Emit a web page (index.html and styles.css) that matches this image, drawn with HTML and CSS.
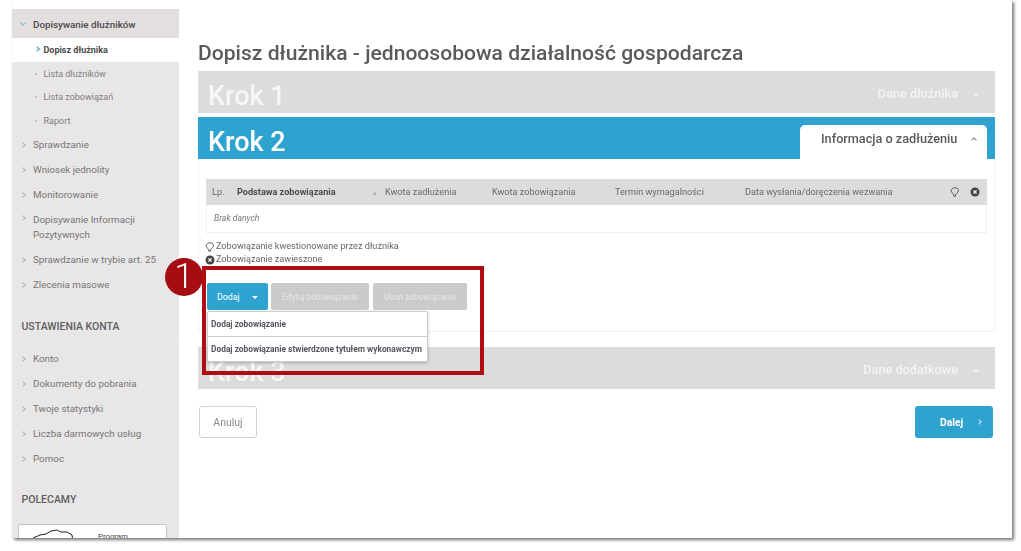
FILE: index.html
```html
<!DOCTYPE html>
<html lang="pl">
<head>
<meta charset="utf-8">
<title>Dopisz dłużnika</title>
<link rel="stylesheet" href="styles.css">
</head>
<body>
<div class="window">
  <aside class="sidebar">
    <div class="nav-item nav-open"><span class="chev chev-down"></span>Dopisywanie dłużników</div>
    <div class="sub-item sub-active"><span class="chev chev-blue"></span>Dopisz dłużnika</div>
    <div class="sub-item"><span class="dot"></span>Lista dłużników</div>
    <div class="sub-item"><span class="dot"></span>Lista zobowiązań</div>
    <div class="sub-item"><span class="dot"></span>Raport</div>
    <div class="nav-item"><span class="chev"></span>Sprawdzanie</div>
    <div class="nav-item"><span class="chev"></span>Wniosek jednolity</div>
    <div class="nav-item"><span class="chev"></span>Monitorowanie</div>
    <div class="nav-item nav-double"><span class="chev"></span>Dopisywanie Informacji<br>Pozytywnych</div>
    <div class="nav-item"><span class="chev"></span>Sprawdzanie w trybie art. 25</div>
    <div class="nav-item"><span class="chev"></span>Zlecenia masowe</div>
    <h3 class="side-heading">USTAWIENIA KONTA</h3>
    <div class="nav-item"><span class="chev"></span>Konto</div>
    <div class="nav-item"><span class="chev"></span>Dokumenty do pobrania</div>
    <div class="nav-item"><span class="chev"></span>Twoje statystyki</div>
    <div class="nav-item"><span class="chev"></span>Liczba darmowych usług</div>
    <div class="nav-item"><span class="chev"></span>Pomoc</div>
    <h3 class="side-heading side-heading-plain">POLECAMY</h3>
    <div class="promo">
      <svg class="promo-map" width="42" height="14" viewBox="0 0 42 14"><path d="M1 9 L8 6 L14 5 L19 2 L25 1 L29 3 L35 3 L40 6 L41 13" fill="none" stroke="#222" stroke-width="1"/></svg>
      <span class="promo-text">Program</span>
    </div>
  </aside>

  <main class="main">
    <h1 class="title">Dopisz dłużnika - jednoosobowa działalność gospodarcza</h1>

    <div class="step step-off">
      <span class="step-name">Krok 1</span>
      <span class="step-label">Dane dłużnika<span class="chev chev-down chev-white"></span></span>
    </div>

    <div class="step step-on">
      <span class="step-name">Krok 2</span>
      <span class="step-tab">Informacja o zadłużeniu<span class="chev chev-up"></span></span>
    </div>

    <section class="panel">
      <div class="grid-head">
        <span>Lp.</span>
        <span class="col-strong">Podstawa zobowiązania</span>
        <span class="sort">▲</span>
        <span>Kwota zadłużenia</span>
        <span>Kwota zobowiązania</span>
        <span>Termin wymagalności</span>
        <span>Data wysłania/doręczenia wezwania</span>
        <svg class="ico" width="10" height="10" viewBox="0 0 10 10"><path d="M5 .8C2.800.8 1.200 2 1.200 3.800c0 1.300.8 2.100 1.800 2.600l.6 1 .3 1.800h1.500l.4-1.900 1-1c.9-.6 1.500-1.400 1.500-2.500C8.800 2 7.200.8 5 .8z" fill="none" stroke="#555" stroke-width="1"/></svg>
        <svg class="ico" width="10" height="10" viewBox="0 0 10 10"><circle cx="5" cy="5" r="4.500" fill="#444"/><path d="M3.400 3.400l3.200 3.200M6.600 3.400l-3.200 3.200" stroke="#fff" stroke-width="1.200"/></svg>
      </div>
      <div class="grid-empty">Brak danych</div>

      <div class="legend">
        <div class="legend-row"><svg class="ico" width="10" height="10" viewBox="0 0 10 10"><path d="M5 .8C2.800.8 1.200 2 1.200 3.800c0 1.300.8 2.100 1.800 2.600l.6 1 .3 1.800h1.500l.4-1.900 1-1c.9-.6 1.500-1.400 1.500-2.500C8.800 2 7.200.8 5 .8z" fill="none" stroke="#555" stroke-width="1"/></svg>Zobowiązanie kwestionowane przez dłużnika</div>
        <div class="legend-row"><svg class="ico" width="10" height="10" viewBox="0 0 10 10"><circle cx="5" cy="5" r="4.500" fill="#444"/><path d="M3.400 3.400l3.200 3.200M6.600 3.400l-3.200 3.200" stroke="#fff" stroke-width="1.200"/></svg>Zobowiązanie zawieszone</div>
      </div>

      <div class="actions">
        <div class="btn-wrap">
          <button class="btn btn-blue">Dodaj<span class="caret"></span></button>
          <div class="menu">
            <div class="menu-item">Dodaj zobowiązanie</div>
            <div class="menu-item">Dodaj zobowiązanie stwierdzone tytułem wykonawczym</div>
          </div>
        </div>
        <button class="btn btn-grey btn-edit">Edytuj zobowiązanie</button>
        <button class="btn btn-grey btn-del">Usuń zobowiązanie</button>
      </div>
    </section>

    <div class="step step-off step-three">
      <span class="step-name">Krok 3</span>
      <span class="step-label">Dane dodatkowe<span class="chev chev-down chev-white"></span></span>
    </div>

    <div class="footer-actions">
      <button class="btn-cancel">Anuluj</button>
      <button class="btn-next">Dalej<span class="chev chev-white"></span></button>
    </div>
  </main>

  <div class="highlight"></div>
  <div class="badge">1</div>
</div>
</body>
</html>
```

FILE: styles.css
```css
* { box-sizing: border-box; }
html, body { margin: 0; padding: 0; height: 551px; background: #fff; overflow: hidden; }
body { font-family: Roboto, "Liberation Sans", sans-serif; color: #666; }

.window {
  position: relative;
  margin-left: 12px;
  width: 1000px;
  height: 538px;
  display: flex;
  background: #fff;
  box-shadow: 2px 2px 3px #777;
  filter: blur(0.35px);
}

.sidebar {
  width: 167px;
  height: 529px;
  margin-top: 9px;
  background: #e8e6e6;
  overflow: hidden;
  flex: none;
  font-size: 9.800px;
}
.nav-item {
  height: 25px;
  line-height: 25px;
  padding-left: 21px;
  position: relative;
  color: #767676;
}
.nav-open { height: 29px; line-height: 31px; background: #e3dfdf; color: #4a4a4a; font-weight: 500; }
.nav-double { height: 40px; line-height: 15px; padding-top: 5px; }
.sub-item {
  height: 23.670px;
  line-height: 24px;
  padding-left: 31.500px;
  font-size: 9px;
  color: #808080;
  position: relative;
}
.sub-active { background: #fff; color: #4a4a4a; font-weight: 700; height: 23.500px; line-height: 24px; }

.chev { display: inline-block; width: 4px; height: 4px; border-top: 1px solid #b4b4b4; border-right: 1px solid #b4b4b4; transform: rotate(45deg); }
.sidebar .chev { position: absolute; left: 9px; top: 11px; }
.sidebar .nav-open .chev { top: 12px; }
.sidebar .sub-item .chev { left: 23px; top: 9px; }
.sidebar .nav-double .chev { top: 9px; }
.chev-down { transform: rotate(135deg); }
.chev-up { transform: rotate(-45deg); }
.sidebar .sub-item .chev-blue { border-color: #2fa3d0; }
.sidebar .nav-open .chev-down { border-color: #7fb9d2; }
.chev-white { border-color: rgba(255,255,255,.75); }
.dot { position: absolute; left: 23px; top: 11px; width: 2px; height: 2px; background: #b4b4b4; border-radius: 50%; }

.side-heading {
  margin: 18.500px 0 6.500px;
  padding: 0 0 5px 9.500px;
  height: 24px;
  line-height: 22px;
  font-size: 10.500px;
  font-weight: 500;
  color: #5f5f5f;
  border-bottom: 1px solid #eeecec;
}
.side-heading-plain { margin: 18px 0 11px; border-bottom: 0; }

.promo {
  margin-left: 6px;
  width: 149px;
  height: 40px;
  background: #fff;
  border: 1px solid #c4c4c4;
  border-radius: 2px;
  display: flex;
  align-items: flex-start;
  padding: 4px 0 0 13px;
  gap: 24px;
}
.promo-text { font-size: 7.800px; line-height: 12px; margin-top: 2px; color: #444; }

.main { width: 797px; margin-left: 19px; flex: none; }
.title {
  margin: 0;
  height: 71px;
  padding-top: 41px;
  font-size: 21.100px;
  line-height: 24px;
  font-weight: 500;
  color: #5a5a5a;
}

.step {
  height: 42px;
  display: flex;
  align-items: center;
  justify-content: space-between;
  padding-left: 10px;
  color: #fff;
}
.step-off { background: #dcdcdc; margin-bottom: 4px; }
.step-on { background: #2fa3d0; align-items: flex-end; padding-right: 8px; }
.step-name { font-size: 27px; font-weight: 500; height: 42px; padding-top: 8px; line-height: 34px; align-self: center; }
.step-off .step-name { color: #f6f6f6; }
.step-label { font-size: 12.700px; font-weight: 500; color: #f3f3f3; padding: 3px 17px 0 0; display: flex; align-items: center; gap: 16px; }
.step-tab {
  width: 187px;
  height: 34px;
  background: #fff;
  border-radius: 5px 5px 0 0;
  color: #5a5a5a;
  font-size: 12.700px;
  font-weight: 500;
  display: flex;
  align-items: center;
  padding: 0 0 8px 21px;
  gap: 15px;
}
.step-tab .chev { border-color: #888; margin-top: 3px; }

.panel {
  height: 173px;
  padding: 20px 7px 0 7px;
  border: 1px solid #f2f2f2;
  border-top: 0;
  font-size: 9.150px;
}
.grid-head {
  height: 26px;
  background: #dcdcdc;
  display: grid;
  grid-template-columns: 25px 135px 13px 107px 123px 130px 205px 20px 10px;
  align-items: center;
  padding-left: 6px;
  color: #6a6a6a;
}
.col-strong { font-weight: 700; color: #4c4c4c; }
.sort { font-size: 6px; color: #aaa; }
.grid-empty {
  height: 28px;
  line-height: 26px;
  padding-left: 7px;
  font-style: italic;
  font-size: 8.600px;
  color: #777;
  border: 1px solid #f0f0f0;
  border-top: 0;
}
.legend { padding: 7px 0 0 0; margin-left: -1px; font-size: 9.150px; line-height: 13px; color: #666; }
.legend-row { display: flex; align-items: center; gap: 1px; height: 13px; }
.ico { display: block; flex: none; }

.actions { display: flex; gap: 3px; margin: 17px 0 0 1px; align-items: flex-start; }
.btn-wrap { position: relative; }
.btn {
  height: 27px;
  border: 0;
  border-radius: 2px;
  font-family: inherit;
  font-size: 8.400px;
  color: #fff;
  padding: 0;
}
.btn-blue { width: 61px; background: #2fa3d0; text-align: left; padding-left: 10px; position: relative; font-size: 8.800px; }
.caret { position: absolute; left: 45px; top: 13px; border: 3px solid transparent; border-top-color: #fff; border-bottom: 0; }
.btn-grey { background: #cbcbcb; color: #e6e6e6; }
.btn-edit { width: 98px; }
.btn-del { width: 94px; margin-left: 1px; }

.menu {
  position: absolute;
  left: 0;
  top: 28px;
  width: 221px;
  height: 51px;
  background: #fff;
  border: 1px solid #ccc;
  box-shadow: 0 1px 3px rgba(0,0,0,.25);
  border-radius: 2px;
  z-index: 2;
}
.menu-item {
  height: 24px;
  line-height: 24px;
  padding-left: 3px;
  font-size: 8.400px;
  font-weight: 700;
  color: #55555f;
  white-space: nowrap;
}
.menu-item + .menu-item { border-top: 1px solid #ccc; height: 25px; }

.step-three { margin: 15px 0 0; }

.footer-actions { display: flex; justify-content: space-between; padding: 17px 2px 0 1px; }
.btn-cancel {
  width: 58px;
  height: 32px;
  background: #fff;
  border: 1px solid #d4d4d4;
  border-radius: 3px;
  font-family: inherit;
  font-size: 10.500px;
  color: #8a8a8a;
}
.btn-next {
  width: 78px;
  height: 32px;
  background: #2fa3d0;
  border: 0;
  border-radius: 3px;
  font-family: inherit;
  font-size: 10.300px;
  font-weight: 700;
  color: #fff;
  padding-left: 25px;
  display: flex;
  align-items: center;
  gap: 14px;
}

.highlight {
  position: absolute;
  left: 190px;
  top: 266px;
  width: 282px;
  height: 109px;
  border: 4px solid #b00d12;
  z-index: 3;
  pointer-events: none;
}
.badge {
  position: absolute;
  left: 153px;
  top: 258px;
  width: 38px;
  height: 38px;
  border-radius: 50%;
  background: #a50d12;
  color: #fff;
  font-size: 35px;
  font-weight: 300;
  line-height: 38px;
  text-align: center;
  z-index: 4;
}
```
